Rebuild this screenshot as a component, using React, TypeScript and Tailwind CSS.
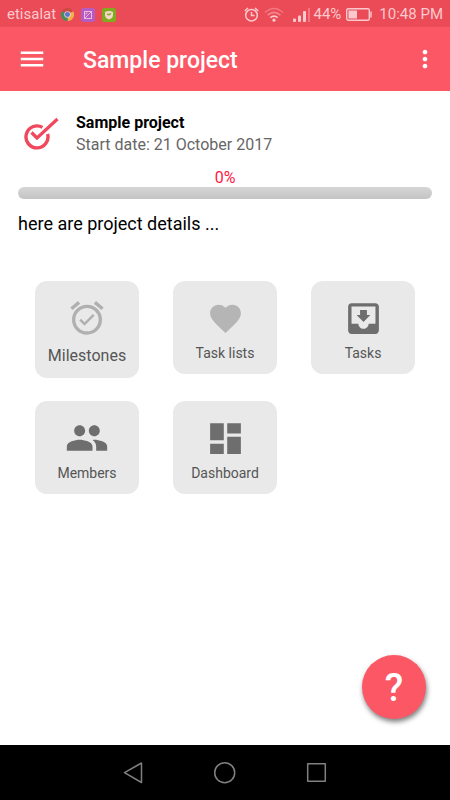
import type { ReactNode } from "react";
import {
  MdAlarmOn,
  MdDashboard,
  MdFavorite,
  MdMenu,
  MdMoreVert,
  MdMoveToInbox,
  MdPeople,
} from "react-icons/md";

const project = {
  name: "Sample project",
  startDate: "21 October 2017",
  progress: 0,
  details: "here are project details ...",
};

function ChromeIcon() {
  return (
    <svg viewBox="0 0 24 24" className="size-[13px]">
      <path d="M12 12 1.6 6A12 12 0 0 1 22.4 6Z" fill="#c94a43" />
      <path d="M12 12 22.4 6A12 12 0 0 1 12 24Z" fill="#f2b04a" />
      <path d="M12 12V24A12 12 0 0 1 1.6 6Z" fill="#3f9159" />
      <circle cx="12" cy="12" r="6" fill="#f3c9cd" />
      <circle cx="12" cy="12" r="4.6" fill="#5677cf" />
    </svg>
  );
}

function GalleryIcon() {
  return (
    <svg viewBox="0 0 14 14" className="size-3.5" fill="none">
      <rect width="14" height="14" rx="2.5" fill="#b45cc4" />
      <rect x="3.5" y="3.5" width="7" height="7" stroke="#efb9dc" />
      <path d="M4 10 10 4M5 6.5V5H6.5" stroke="#efb9dc" strokeWidth="0.9" />
    </svg>
  );
}

function ShieldIcon() {
  return (
    <svg viewBox="0 0 14 14" className="size-3.5">
      <rect width="14" height="14" rx="2.5" fill="#7fab1c" />
      <path d="M3 4Q7 2 11 4V7Q11 10 7 11.5Q3 10 3 7Z" fill="#f6d5cd" />
      <path d="M4.5 5.5Q7 6.5 9.5 4.8Q9 7.5 6.5 7.5Q5 7.2 4.5 5.5Z" fill="#7fab1c" />
    </svg>
  );
}

function AlarmIcon() {
  return (
    <svg viewBox="0 0 15 15" className="size-[15px]" fill="none" stroke="currentColor" strokeWidth="1.5">
      <circle cx="7.5" cy="8.2" r="5.8" />
      <path d="M7.5 5V8.5H10.5M0.8 4 4 1M14.2 4 11 1" />
    </svg>
  );
}

function WifiIcon() {
  return (
    <svg viewBox="0 0 20 15" className="h-[15px] w-5" fill="none" stroke="currentColor" strokeWidth="1.6">
      <path d="M1 5.5Q10 -2.5 19 5.5" opacity="0.35" />
      <path d="M3.6 8.2Q10 2.5 16.4 8.2" opacity="0.45" />
      <path d="M6.3 10.7Q10 7.4 13.7 10.7" />
      <circle cx="10" cy="13.2" r="1.6" fill="currentColor" stroke="none" />
    </svg>
  );
}

function SignalIcon() {
  return (
    <svg viewBox="0 0 17 14" className="h-3.5 w-[17px]" fill="currentColor">
      <rect x="0" y="10.5" width="3" height="3.5" rx="1" />
      <rect x="5" y="7.5" width="3" height="6.5" rx="1" />
      <rect x="10" y="3" width="3" height="11" rx="1" />
      <rect x="15" y="0" width="2" height="14" opacity="0.35" />
    </svg>
  );
}

function BatteryIcon() {
  return (
    <svg viewBox="0 0 26 13" className="h-[13px] w-[26px]" fill="none">
      <rect x="0.7" y="0.7" width="22.6" height="11.6" rx="1.5" stroke="currentColor" strokeWidth="1.4" />
      <rect x="2.5" y="2.5" width="8.5" height="8" fill="currentColor" />
      <path d="M25 3.5V9.5" stroke="currentColor" strokeWidth="1.4" />
    </svg>
  );
}

function StatusBar() {
  return (
    <div className="flex h-[27px] items-center justify-between bg-[#eb4b57] px-[7px] pt-0.5 text-[15px] text-[#fbc9cd]">
      <div className="flex items-center gap-[7px]">
        <span className="-mr-0.5">etisalat</span>
        <ChromeIcon />
        <GalleryIcon />
        <ShieldIcon />
      </div>
      <div className="flex items-center gap-[5px]">
        <AlarmIcon />
        <WifiIcon />
        <span className="ml-1 flex items-center gap-1">
          <SignalIcon />
          44%
        </span>
        <BatteryIcon />
        <span className="pl-0.5">10:48 PM</span>
      </div>
    </div>
  );
}

function AppBar() {
  return (
    <header className="flex h-16 items-center bg-[#fc5765] px-[17px] text-white">
      <button type="button" aria-label="Open menu" className="cursor-pointer">
        <MdMenu size={30} />
      </button>
      <h1 className="ml-9 flex-1 pt-1 text-[23px] font-medium">{project.name}</h1>
      <button type="button" aria-label="More options" className="-mr-1.5 cursor-pointer">
        <MdMoreVert size={28} />
      </button>
    </header>
  );
}

function ProjectLogo() {
  return (
    <svg viewBox="0 0 36 34" className="h-[34px] w-9 shrink-0" fill="none" stroke="#f0485c">
      <path d="M18.5 10.4A11 11 0 1 0 23.6 17" strokeWidth="3.4" />
      <path d="M7.5 15.5 13 21 33.5 2" strokeWidth="3.2" />
    </svg>
  );
}

type TileProps = {
  label: string;
  icon: ReactNode;
  large?: boolean;
};

function Tile({ label, icon, large }: TileProps) {
  return (
    <button
      type="button"
      className="flex cursor-pointer flex-col items-center rounded-xl bg-[#e9e9e9] pt-[15px] pb-[11px] text-[#555]"
    >
      <span className="flex h-11 items-center">{icon}</span>
      <span className={large ? "mt-1 text-base leading-[23px]" : "mt-1 text-sm leading-[19px]"}>{label}</span>
    </button>
  );
}

const tiles: TileProps[] = [
  { label: "Milestones", icon: <MdAlarmOn size={40} color="#b0b0b0" />, large: true },
  { label: "Task lists", icon: <MdFavorite size={37} color="#b5b5b5" /> },
  { label: "Tasks", icon: <MdMoveToInbox size={41} color="#6e6e6e" /> },
  { label: "Members", icon: <MdPeople size={44} color="#6e6e6e" /> },
  { label: "Dashboard", icon: <MdDashboard size={41} color="#6e6e6e" /> },
];

function NavBar() {
  return (
    <nav className="flex h-[55px] items-center justify-center gap-[68px] bg-black text-[#808080]">
      <button type="button" aria-label="Back" className="cursor-pointer">
        <svg viewBox="0 0 24 24" className="size-6" fill="none" stroke="currentColor" strokeWidth="1.5" strokeLinejoin="round">
          <path d="M20.5 2V21.5L3.5 11.7Z" />
        </svg>
      </button>
      <button type="button" aria-label="Home" className="cursor-pointer">
        <svg viewBox="0 0 24 24" className="size-6" fill="none" stroke="currentColor" strokeWidth="1.5">
          <circle cx="11.7" cy="11.7" r="10" />
        </svg>
      </button>
      <button type="button" aria-label="Recent apps" className="cursor-pointer">
        <svg viewBox="0 0 24 24" className="size-6" fill="none" stroke="currentColor" strokeWidth="1.5" strokeLinejoin="round">
          <rect x="2.7" y="2.7" width="17.6" height="17.6" />
        </svg>
      </button>
    </nav>
  );
}

export default function App() {
  return (
    <div className="flex min-h-screen flex-col bg-white font-[Roboto,sans-serif]">
      <StatusBar />
      <AppBar />
      <main className="relative flex-1 px-[18px] pt-[21px]">
        <section className="flex items-start gap-4 pl-1.5">
          <div className="pt-[5px]">
            <ProjectLogo />
          </div>
          <div>
            <h2 className="text-base leading-[22px] font-bold text-black">{project.name}</h2>
            <p className="text-base leading-[22px] text-[#666]">Start date: {project.startDate}</p>
          </div>
        </section>

        <div className="mt-3 text-center text-base leading-[19px] text-[#ff1744]">{project.progress}%</div>
        <div
          role="progressbar"
          aria-label="Project progress"
          aria-valuenow={project.progress}
          className="h-3 overflow-hidden rounded-full bg-linear-to-b from-[#d6d6d6] to-[#c4c4c4]"
        >
          <div className="h-full bg-[#fc5765]" style={{ width: `${project.progress}%` }} />
        </div>
        <p className="mt-[13px] text-lg leading-6 text-black">{project.details}</p>

        <div className="mt-[45px] grid grid-cols-3 items-start gap-x-[34px] gap-y-[23px] px-[17px]">
          {tiles.map((tile) => (
            <Tile key={tile.label} {...tile} />
          ))}
        </div>

        <button
          type="button"
          aria-label="Help"
          className="absolute right-6 bottom-[26px] flex size-16 cursor-pointer items-center justify-center rounded-full bg-[#fc5765] pt-0.5 text-[38px] font-medium text-white shadow-[1px_3px_5px_rgba(0,0,0,0.5)]"
        >
          ?
        </button>
      </main>
      <NavBar />
    </div>
  );
}
